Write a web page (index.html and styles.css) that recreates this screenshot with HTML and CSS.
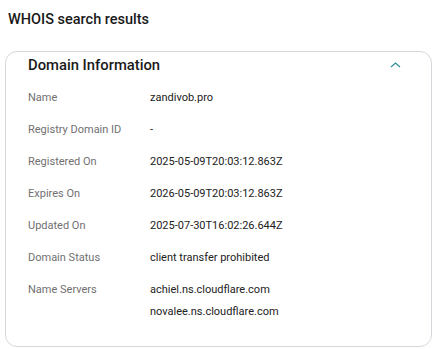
FILE: index.html
```html
<!DOCTYPE html>
<html>
<head>
<meta charset="utf-8">
<link rel="stylesheet" href="styles.css">
</head>
<body>
<div class="page">
  <h1 class="title">WHOIS search results</h1>
  <section class="card">
    <div class="card-head">
      <h2 class="card-title">Domain Information</h2>
      <svg class="chev" width="11" height="6" viewBox="0 0 11 6"><path d="M1 5 L5.5 1 L10 5" fill="none" stroke="#2a8c99" stroke-width="1.1"/></svg>
    </div>
    <div class="rows">
      <div class="row"><div class="label">Name</div><div class="value">zandivob.pro</div></div>
      <div class="row"><div class="label">Registry Domain ID</div><div class="value">-</div></div>
      <div class="row"><div class="label">Registered On</div><div class="value">2025-05-09T20:03:12.863Z</div></div>
      <div class="row"><div class="label">Expires On</div><div class="value">2026-05-09T20:03:12.863Z</div></div>
      <div class="row"><div class="label">Updated On</div><div class="value">2025-07-30T16:02:26.644Z</div></div>
      <div class="row"><div class="label">Domain Status</div><div class="value">client transfer prohibited</div></div>
      <div class="row"><div class="label">Name Servers</div><div class="value"><div>achiel.ns.cloudflare.com</div><div class="ns2">novalee.ns.cloudflare.com</div></div></div>
    </div>
  </section>
</div>
</body>
</html>
```

FILE: styles.css
```css
* { box-sizing: border-box; }
html, body { margin: 0; padding: 0; background: #fff; }
body { font-family: Roboto, "Noto Sans", sans-serif; color: #111; }
.page { padding: 11px 8px 0 5px; }
.title { margin: 0 0 22px 3px; font-size: 14.5px; font-weight: 500; line-height: 18px; color: #1a1a1a; }
.card { width: 427px; height: 296px; border: 1px solid #d4d8dc; border-radius: 12px; padding: 0 0 0 22px; }
.card-head { display: flex; align-items: center; justify-content: space-between; height: 26px; padding-right: 30px; }
.card-title { margin: 0; font-size: 14.8px; font-weight: 500; line-height: 26px; color: #1a1a1a; }
.chev { display: block; }
.rows { padding-top: 13px; }
.row { display: flex; min-height: 32px; font-size: 11px; line-height: 14px; }
.label { width: 122px; color: #707070; }
.value { color: #222; }
.ns2 { margin-top: 8px; }
```
